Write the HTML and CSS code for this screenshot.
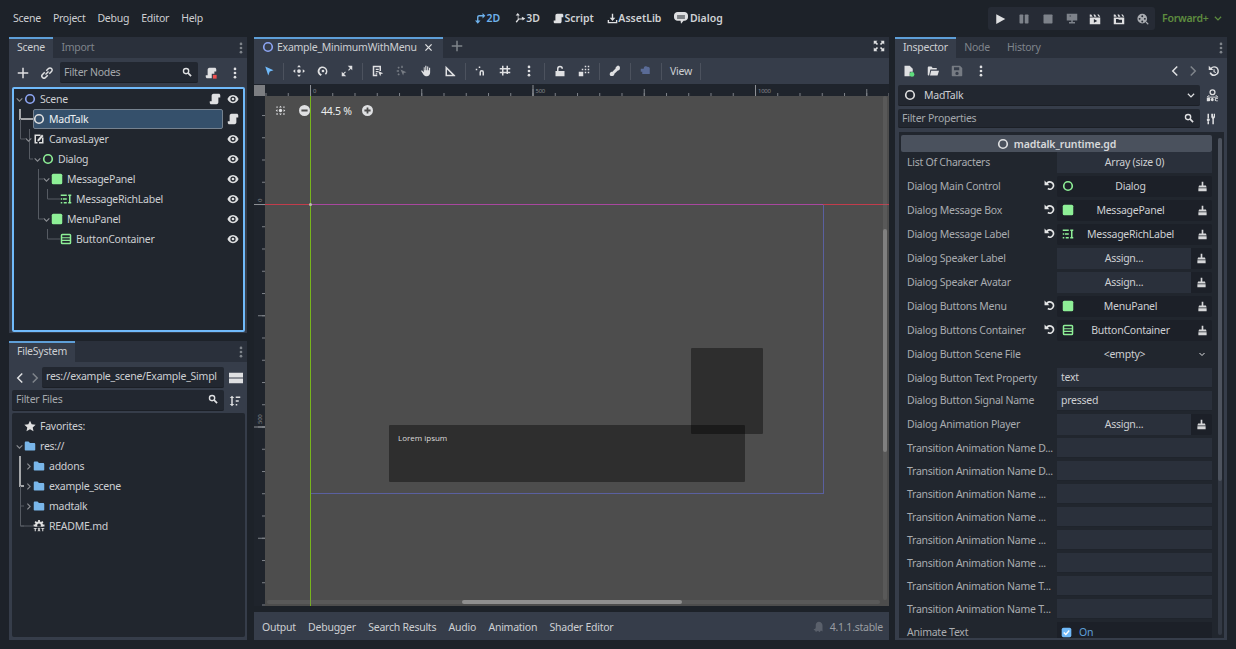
FILE: index.html
```html
<!DOCTYPE html>
<html lang="en">
<head>
<meta charset="utf-8">
<title>Godot Editor</title>
<link rel="stylesheet" href="styles.css">
</head>
<body>
<svg class="defs" aria-hidden="true">
  <symbol id="eye" viewBox="0 0 16 16"><path fill-rule="evenodd" d="M8 2.500C4 2.500 1.500 5.500.6 8c.9 2.500 3.400 5.500 7.400 5.500s6.500-3 7.400-5.500C14.500 5.500 12 2.500 8 2.500zm0 2a3.500 3.500 0 1 1 0 7 3.500 3.500 0 0 1 0-7z"/><circle cx="8" cy="8" r="1.800"/></symbol>
  <symbol id="script" viewBox="0 0 16 16"><path d="M6 1C4.300 1 3.500 2.300 3.500 4v7H1v2c0 1.100.9 2 2 2h7c1.700 0 2.500-1.300 2.500-3V6H15V3c0-1.100-.9-2-2-2z"/></symbol>
  <symbol id="node" viewBox="0 0 16 16"><circle cx="8" cy="8" r="5.700" fill="none" stroke="currentColor" stroke-width="2.200"/></symbol>
  <symbol id="panel" viewBox="0 0 16 16"><rect x="1" y="1" width="14" height="14" rx="2"/></symbol>
  <symbol id="rich" viewBox="0 0 16 16"><path d="M1 2h8v2H1zM4 7h5v2H4zM1 12h2v2H1zM5 12h4v2H5zM11 2h4v2h-1v8h1v2h-4v-2h1V4h-1z"/><path d="M1 7h2v2H1z"/></symbol>
  <symbol id="box" viewBox="0 0 16 16"><path fill-rule="evenodd" d="M3 1h10a2 2 0 0 1 2 2v10a2 2 0 0 1-2 2H3a2 2 0 0 1-2-2V3a2 2 0 0 1 2-2zm0 2v2.500h10V3zm0 4v2h10V7zm0 3.500V13h10v-2.500z"/></symbol>
  <symbol id="canvas" viewBox="0 0 16 16"><path d="M2 2h8v2H4v8h2v2H2zM14 6v8H8v-2h4V6z"/><path d="M6 9l6-7 2 2-6 7H6z"/></symbol>
  <symbol id="chev-d" viewBox="0 0 16 16"><path d="M3 6l5 5 5-5" fill="none" stroke="currentColor" stroke-width="2"/></symbol>
  <symbol id="chev-r" viewBox="0 0 16 16"><path d="M6 3l5 5-5 5" fill="none" stroke="currentColor" stroke-width="2"/></symbol>
  <symbol id="back" viewBox="0 0 16 16"><path d="M11 2L5 8l6 6" fill="none" stroke="currentColor" stroke-width="2"/></symbol>
  <symbol id="fwd" viewBox="0 0 16 16"><path d="M5 2l6 6-6 6" fill="none" stroke="currentColor" stroke-width="2"/></symbol>
  <symbol id="search" viewBox="0 0 16 16"><circle cx="6.500" cy="6.500" r="4.200" fill="none" stroke="currentColor" stroke-width="2.200"/><path d="M9.500 9.500l5 5" stroke="currentColor" stroke-width="2.800"/></symbol>
  <symbol id="plus" viewBox="0 0 16 16"><path d="M7 1h2v6h6v2H9v6H7V9H1V7h6z"/></symbol>
  <symbol id="link" viewBox="0 0 16 16"><path d="M6 10l4-4" stroke="currentColor" stroke-width="2"/><path d="M7 5l3-3a2.800 2.800 0 0 1 4 4l-3 3M9 11l-3 3a2.800 2.800 0 0 1-4-4l3-3" fill="none" stroke="currentColor" stroke-width="2"/></symbol>
  <symbol id="dots" viewBox="0 0 16 16"><circle cx="8" cy="2.500" r="1.800"/><circle cx="8" cy="8" r="1.800"/><circle cx="8" cy="13.500" r="1.800"/></symbol>
  <symbol id="folder" viewBox="0 0 16 16"><path d="M1 3.500C1 2.700 1.700 2 2.500 2H6l2 2h5.500c.8 0 1.500.7 1.500 1.500V13c0 .6-.4 1-1 1H2c-.6 0-1-.4-1-1z"/></symbol>
  <symbol id="star" viewBox="0 0 16 16"><path d="M8 1l2.200 4.800 5.300.6-3.900 3.500 1.100 5.200L8 12.400 3.300 15.100l1.100-5.200L.5 6.400l5.300-.6z"/></symbol>
  <symbol id="gear" viewBox="0 0 16 16"><path fill-rule="evenodd" d="M6.800 0h2.400v2l1.700.7L12.300 1.300 14 3l-1.400 1.400.7 1.700h2v2.400h-2l-.2.500H2.900l-.2-.5h-2V6.100h2l.7-1.700L2 3l1.700-1.700 1.400 1.400L6.800 2zM8 4.500a2.500 2.500 0 1 0 0 5 2.500 2.500 0 0 0 0-5z"/><path d="M1 10.500h4v1.300H3.700V15H2.300v-3.200H1zM6 10.500h1.500L8 12l.6-1.500H10L8.800 12.800 10 15H8.500L8 13.700 7.400 15H6l1.200-2.200zM11 10.500h4v1.300h-1.300V15h-1.400v-3.200H11z"/></symbol>
  <symbol id="layout" viewBox="0 0 16 16"><path d="M0 2h16v5.300H0zM0 8.700h16V14H0z"/></symbol>
  <symbol id="sort" viewBox="0 0 16 16"><path d="M4 1l3 3H5v8h2l-3 3-3-3h2V4H1zM9 2h6v2H9zM9 7h4v2H9zM9 12h2v2H9z"/></symbol>
  <symbol id="arrow" viewBox="0 0 16 16"><path d="M3 2l11 5-5 1.500L7 14z"/></symbol>
  <symbol id="move" viewBox="0 0 16 16"><path d="M8 0l2.500 3h-5zM8 16l-2.500-3h5zM0 8l3-2.500v5zM16 8l-3 2.500v-5z"/><circle cx="8" cy="8" r="2.500"/></symbol>
  <symbol id="rotate" viewBox="0 0 16 16"><path d="M5 14.500A6.500 6.500 0 1 1 12 13l-1.500-1.500A4.300 4.300 0 1 0 6.500 12.400z"/><circle cx="8" cy="8" r="1.800"/></symbol>
  <symbol id="scale" viewBox="0 0 16 16"><path d="M9 1h6v6l-2-2-2.500 2.500-1-1L12 4zM7 15H1V9l2 2 2.500-2.500 1 1L4 12z"/></symbol>
  <symbol id="list" viewBox="0 0 16 16"><path fill-rule="evenodd" d="M1 1h11v7h-2V3H3v10h4v2H1z"/><path d="M5 5h4v1.500H5zM5 8h3v1.500H5zM5 11h2v1.500H5zM8 8l7 3-3 1-1 3z"/></symbol>
  <symbol id="pivot" viewBox="0 0 16 16"><path d="M7 1h2v3H7zM1 7h3v2H1zM6 6l8 3.500-3.500 1L9.500 14zM2 3l2-1 1 2-2 1zM2 13l1-2 2 1-1 2z"/></symbol>
  <symbol id="hand" viewBox="0 0 16 16"><path d="M7 1h1.500v6H9.500V2H11v5h1V3.500h1.500V10c0 3-2 5-4.500 5-2 0-3.500-1-4.500-2.500L1.500 8l1-1 2.500 2.500V3h1.200v4H7z"/></symbol>
  <symbol id="ruler" viewBox="0 0 16 16"><path fill-rule="evenodd" d="M2 1l13 13v1H2zm2 5v7h7z"/></symbol>
  <symbol id="snap" viewBox="0 0 16 16"><path d="M6 14V9.500a3 3 0 0 1 6 0V14h-2V9.500a1 1 0 0 0-2 0V14zM1 5h2v2H1zM5 2h2v2H5z"/></symbol>
  <symbol id="grid" viewBox="0 0 16 16"><path d="M4 1h2v3h4V1h2v3h3v2h-3v3h3v2h-3v1H10v-1H6v3H4v-3H1V9h3V6H1V4h3zm2 5v3h4V6z"/></symbol>
  <symbol id="lock" viewBox="0 0 16 16"><path d="M2 8h12v7H2z"/><path d="M4 8V5a4 4 0 0 1 8 0h-2a2 2 0 0 0-4 0v3z"/></symbol>
  <symbol id="group" viewBox="0 0 16 16"><path d="M1 9h6v6H1zM9 1h2v2H9zM13 1h2v2h-2zM13 5h2v2h-2zM9 5h2v2H9zM5 5h2v2H5zM9 9h2v2H9zM13 9h2v2h-2z"/></symbol>
  <symbol id="bone" viewBox="0 0 16 16"><path d="M10.500 1.500a2.500 2.500 0 0 1 4 2.700 2.500 2.500 0 0 1-2.700 3L7.200 11.800a2.500 2.500 0 0 1-3 2.700 2.500 2.500 0 0 1-2.700-4 2.500 2.500 0 0 1 2.700-1.300L8.800 4.600c-.3-1.200.5-2.500 1.700-3.100z"/></symbol>
  <symbol id="cam" viewBox="0 0 16 16"><path d="M5 4a3 3 0 0 1 5-1.500A3 3 0 0 1 13 6v6H3V9H1V5h4z"/></symbol>
  <symbol id="fit" viewBox="0 0 16 16"><circle cx="8" cy="8" r="2.400"/><path d="M8 1l2 2.500H6zM8 15l-2-2.500h4zM1 8l2.500-2v4zM15 8l-2.500 2V6zM2 2h2v2H2zM12 2h2v2h-2zM2 12h2v2H2zM12 12h2v2h-2z"/></symbol>
  <symbol id="zminus" viewBox="0 0 16 16"><path fill-rule="evenodd" d="M8 0a8 8 0 1 1 0 16A8 8 0 0 1 8 0zM3.500 6.700v2.600h9V6.700z"/></symbol>
  <symbol id="zplus" viewBox="0 0 16 16"><path fill-rule="evenodd" d="M8 0a8 8 0 1 1 0 16A8 8 0 0 1 8 0zM6.700 3.500v3.200H3.500v2.600h3.200v3.200h2.600V9.300h3.200V6.700H9.300V3.500z"/></symbol>
  <symbol id="close" viewBox="0 0 16 16"><path d="M2.500 2.500l11 11M13.500 2.500l-11 11" stroke="currentColor" stroke-width="2.300"/></symbol>
  <symbol id="full" viewBox="0 0 16 16"><path d="M1 1h5L4.300 2.700l2.500 2.500-1.600 1.600-2.500-2.500L1 6zM15 1v5l-1.700-1.700-2.500 2.500-1.600-1.600 2.500-2.500L10 1zM1 15v-5l1.700 1.700 2.500-2.500 1.600 1.600-2.500 2.500L6 15zM15 15h-5l1.700-1.700-2.500-2.500 1.600-1.600 2.500 2.500L15 10z"/></symbol>
  <symbol id="i2d" viewBox="0 0 16 16"><path d="M3 11V6c0-1.700 1.300-3 3-3h5V0l4 4-4 4V5H6a1 1 0 0 0-1 1v5h3l-4 4.500L0 11z"/></symbol>
  <symbol id="i3d" viewBox="0 0 16 16"><path d="M4 0l3 3.500H5V8h5V5.500L15 8l-4 3V9.500H6L2.500 14 1 12.500 4 9V3.500H1z"/></symbol>
  <symbol id="asset" viewBox="0 0 16 16"><path d="M7 1h2v6h3l-4 4.500L4 7h3zM1 10h2v3h10v-3h2v5H1z"/></symbol>
  <symbol id="bubble" viewBox="0 0 16 16"><path d="M4 1h8c2 0 4 1.500 4 4v2c0 2.500-2 4-4 4h-1l-3 3.500L7.500 11H4C2 11 0 9.500 0 7V5c0-2.500 2-4 4-4z"/><path d="M3.500 5h9v1.300h-9zM3.500 7.500h9v1h-9z" fill="#1d2229"/></symbol>
  <symbol id="play" viewBox="0 0 16 16"><path d="M3 1.500l12 6.500-12 6.500z"/></symbol>
  <symbol id="pause" viewBox="0 0 16 16"><rect x="2" y="2" width="5" height="12" rx="1"/><rect x="9" y="2" width="5" height="12" rx="1"/></symbol>
  <symbol id="stop" viewBox="0 0 16 16"><rect x="2" y="2" width="12" height="12" rx="1"/></symbol>
  <symbol id="remote" viewBox="0 0 16 16"><path fill-rule="evenodd" d="M1 1h14v9H9v2h3v2H4v-2h3v-2H1zm4 2v2l2-1z"/></symbol>
  <symbol id="clap" viewBox="0 0 16 16"><path d="M1 6h14v9H1zM1 2h2l2 3H1zM6 2h2l2 3H7zM11 2h2l2 3h-2z"/><path d="M6.500 8v5l4.500-2.500z" fill="#262b35"/></symbol>
  <symbol id="clap2" viewBox="0 0 16 16"><path d="M1 6h14v9H1zM1 2h2l2 3H1zM6 2h2l2 3H7zM11 2h2l2 3h-2z"/><path d="M4 8h3l1 1h4v4H4z" fill="#262b35"/></symbol>
  <symbol id="reel" viewBox="0 0 16 16"><path fill-rule="evenodd" d="M7 1a6.500 6.500 0 1 1 0 13A6.500 6.500 0 0 1 7 1zM7 3a1.300 1.300 0 1 0 0 2.600A1.300 1.300 0 0 0 7 3zM3.500 6.500a1.300 1.300 0 1 0 0 2.600 1.300 1.300 0 0 0 0-2.600zm7 0a1.300 1.300 0 1 0 0 2.600 1.300 1.300 0 0 0 0-2.600zM7 10a1.300 1.300 0 1 0 0 2.600A1.300 1.300 0 0 0 7 10z"/><path d="M12 12l3 3" stroke="currentColor" stroke-width="1.500"/></symbol>
  <symbol id="newfile" viewBox="0 0 16 16"><path d="M2 1h7l4 4v4H9v6H2z"/><circle cx="12" cy="12.500" r="3.200" fill="#5fdd7d"/></symbol>
  <symbol id="open" viewBox="0 0 16 16"><path d="M1 3.500C1 2.700 1.700 2 2.500 2H6l1.500 2h5.500v2H4.500L2.800 14H2c-.6 0-1-.4-1-1z"/><path d="M5.500 7.500H16L14 14H4z"/></symbol>
  <symbol id="save" viewBox="0 0 16 16"><path fill-rule="evenodd" d="M1 2c0-.6.4-1 1-1h10l3 3v10c0 .6-.4 1-1 1H2c-.6 0-1-.4-1-1zm3 1v4h7V3zm4 6a2.200 2.200 0 1 0 0 4.400A2.200 2.200 0 0 0 8 9z"/></symbol>
  <symbol id="history" viewBox="0 0 16 16"><path d="M8 1.500A6.500 6.500 0 1 1 2 10.500l1.900-.8A4.500 4.500 0 1 0 8 3.500a4.300 4.300 0 0 0-2.800 1L7 6.500H1V1l2.700 2.700A6.500 6.500 0 0 1 8 1.500z"/><path d="M7.300 5.500h1.500v3l2 1-.7 1.300-2.800-1.500z"/></symbol>
  <symbol id="doc" viewBox="0 0 16 16"><circle cx="8" cy="4" r="3" fill="none" stroke="currentColor" stroke-width="1.600"/><path d="M4 7.500L1.500 10h13L12 7.500" fill="none" stroke="currentColor" stroke-width="1.200"/><path d="M1 11h3c1 0 1.300.8 1.300 2S5 15 4 15H1zM6 13c0-1.300.7-2 1.800-2s1.700.7 1.700 2-.6 2-1.700 2S6 14.300 6 13zM14.700 11H12.500c-1 0-1.700.7-1.700 2s.7 2 1.700 2h2.200v-1h-2c-.5 0-.7-.4-.7-1s.2-1 .7-1h2z"/></symbol>
  <symbol id="tune" viewBox="0 0 16 16"><path d="M2 1h2v6H2zM2 11h2v4H2zM7 1v4c0 1 .5 2 1.500 2.500V15h2V7.500C11.500 7 12 6 12 5V1h-1.500v3.500h-1V1z"/><circle cx="3" cy="9" r="2"/></symbol>
  <symbol id="reset" viewBox="0 0 16 16"><path d="M8.500 1.500a6.500 6.500 0 1 1-3.600 11.900l1.400-2a4 4 0 1 0-.7-6.100l2.300 2.400H.8V.8l2.700 2.800A6.500 6.500 0 0 1 8.500 1.500z"/></symbol>
  <symbol id="brush" viewBox="0 0 16 16"><path d="M6.800 1h2.400v5.500H13l1 3H2l1-3h3.800zM2 10.500h12V15H2z"/></symbol>
  <symbol id="ghost" viewBox="0 0 16 16"><path d="M9 1c3 0 5 2.500 5 5v8l-2-1.500L10 15l-2-2-3 1.500c0-2-2-2-3-3.500 2 0 3-1 3-3V5c0-2 2-4 4-4z"/></symbol>
  <symbol id="check" viewBox="0 0 16 16"><rect x="1" y="1" width="14" height="14" rx="2.500"/><path d="M4 8l3 3 5-6" fill="none" stroke="#fff" stroke-width="2"/></symbol>
  <symbol id="addscript" viewBox="0 0 16 16"><path d="M6 1C4.300 1 3.500 2.300 3.500 4v7H1v2c0 1.100.9 2 2 2h6V9h3.500V6H15V3c0-1.100-.9-2-2-2z"/><rect x="10.500" y="10.500" width="5" height="5" fill="#f05050"/></symbol>
</svg>

<header class="topbar">
  <nav class="menu">
    <span>Scene</span><span>Project</span><span>Debug</span><span>Editor</span><span>Help</span>
  </nav>
  <nav class="modes">
    <span class="mode mode-on"><svg class="ic"><use href="#i2d"/></svg>2D</span>
    <span class="mode"><svg class="ic"><use href="#i3d"/></svg>3D</span>
    <span class="mode"><svg class="ic"><use href="#script"/></svg>Script</span>
    <span class="mode"><svg class="ic"><use href="#asset"/></svg>AssetLib</span>
    <span class="mode"><svg class="ic ic-wide"><use href="#bubble"/></svg>Dialog</span>
  </nav>
  <div class="runbar">
    <span class="run-btn"><svg class="ic"><use href="#play"/></svg></span>
    <span class="run-btn dim"><svg class="ic"><use href="#pause"/></svg></span>
    <span class="run-btn dim"><svg class="ic"><use href="#stop"/></svg></span>
    <span class="run-btn dim"><svg class="ic"><use href="#remote"/></svg></span>
    <span class="run-btn"><svg class="ic"><use href="#clap"/></svg></span>
    <span class="run-btn"><svg class="ic"><use href="#clap2"/></svg></span>
    <span class="run-btn dim2"><svg class="ic"><use href="#reel"/></svg></span>
  </div>
  <div class="renderer">Forward+<svg class="ic ic-sm"><use href="#chev-d"/></svg></div>
</header>

<main class="main">
  <aside class="left">
    <section class="panel scene-panel">
      <div class="tabs">
        <span class="tab on">Scene</span><span class="tab">Import</span>
        <svg class="ic tabs-dots"><use href="#dots"/></svg>
      </div>
      <div class="scene-tools">
        <span class="btn22"><svg class="ic"><use href="#plus"/></svg></span>
        <span class="btn22"><svg class="ic"><use href="#link"/></svg></span>
        <div class="field filter-nodes"><span class="ph">Filter Nodes</span><svg class="ic ic-sm"><use href="#search"/></svg></div>
        <span class="btn22"><svg class="ic"><use href="#addscript"/></svg></span>
        <span class="btn22"><svg class="ic"><use href="#dots"/></svg></span>
      </div>
      <div class="tree scene-tree">
        <svg class="tree-lines" width="229" height="241">
          <path class="ln-hi" d="M6 20V30H19"/>
          <path class="ln" d="M6.500 30V50H11M15.500 40V70H19M24.500 80V130H29M24.500 90H29M33.500 100V110H46M33.500 140V150H46"/>
        </svg>
        <div class="row l0"><svg class="chev"><use href="#chev-d"/></svg><svg class="ic n-blue"><use href="#node"/></svg><span class="lb">Scene</span><svg class="ic act a1"><use href="#script"/></svg><svg class="ic act"><use href="#eye"/></svg></div>
        <div class="row row-sel"><div class="sel"><svg class="ic n-white"><use href="#node"/></svg><span class="lb lb-sel">MadTalk</span></div><svg class="ic act a2"><use href="#script"/></svg></div>
        <div class="row l1"><svg class="chev"><use href="#chev-d"/></svg><svg class="ic n-white"><use href="#canvas"/></svg><span class="lb">CanvasLayer</span><svg class="ic act"><use href="#eye"/></svg></div>
        <div class="row l2"><svg class="chev"><use href="#chev-d"/></svg><svg class="ic n-green"><use href="#node"/></svg><span class="lb">Dialog</span><svg class="ic act"><use href="#eye"/></svg></div>
        <div class="row l3"><svg class="chev"><use href="#chev-d"/></svg><svg class="ic n-green"><use href="#panel"/></svg><span class="lb">MessagePanel</span><svg class="ic act"><use href="#eye"/></svg></div>
        <div class="row l4"><span class="chev"></span><svg class="ic n-green"><use href="#rich"/></svg><span class="lb">MessageRichLabel</span><svg class="ic act"><use href="#eye"/></svg></div>
        <div class="row l3"><svg class="chev"><use href="#chev-d"/></svg><svg class="ic n-green"><use href="#panel"/></svg><span class="lb">MenuPanel</span><svg class="ic act"><use href="#eye"/></svg></div>
        <div class="row l4"><span class="chev"></span><svg class="ic n-green"><use href="#box"/></svg><span class="lb">ButtonContainer</span><svg class="ic act"><use href="#eye"/></svg></div>
      </div>
    </section>

    <section class="panel fs-panel">
      <div class="tabs">
        <span class="tab on">FileSystem</span>
        <svg class="ic tabs-dots"><use href="#dots"/></svg>
      </div>
      <div class="fs-path">
        <span class="btn15"><svg class="ic"><use href="#back"/></svg></span>
        <span class="btn15 dim"><svg class="ic"><use href="#fwd"/></svg></span>
        <div class="field path-field">res://example_scene/Example_Simpl</div>
        <span class="fs-layout"><svg class="ic ic-lg"><use href="#layout"/></svg></span>
      </div>
      <div class="fs-filter">
        <div class="field filter-files"><span class="ph">Filter Files</span><svg class="ic ic-sm"><use href="#search"/></svg></div>
        <span class="fs-sort"><svg class="ic"><use href="#sort"/></svg></span>
      </div>
      <div class="tree fs-tree">
        <svg class="tree-lines" width="229" height="220">
          <path class="ln-hi" d="M6 41V71H10"/>
          <path class="ln" d="M6.500 71V111H10M6.500 91H10M6.500 111H19"/>
        </svg>
        <div class="row l0"><span class="chev"></span><svg class="ic n-white"><use href="#star"/></svg><span class="lb">Favorites:</span></div>
        <div class="row l0"><svg class="chev"><use href="#chev-d"/></svg><svg class="ic n-folder"><use href="#folder"/></svg><span class="lb">res://</span></div>
        <div class="row l1"><svg class="chev"><use href="#chev-r"/></svg><svg class="ic n-folder"><use href="#folder"/></svg><span class="lb">addons</span></div>
        <div class="row l1"><svg class="chev"><use href="#chev-r"/></svg><svg class="ic n-folder"><use href="#folder"/></svg><span class="lb">example_scene</span></div>
        <div class="row l1"><svg class="chev"><use href="#chev-r"/></svg><svg class="ic n-folder"><use href="#folder"/></svg><span class="lb">madtalk</span></div>
        <div class="row l1"><span class="chev"></span><svg class="ic n-white"><use href="#gear"/></svg><span class="lb">README.md</span></div>
      </div>
    </section>
  </aside>

  <section class="center">
    <div class="doc-tabs">
      <span class="doc-tab"><svg class="ic n-blue"><use href="#node"/></svg><span class="doc-name">Example_MinimumWithMenu</span><svg class="ic ic-close"><use href="#close"/></svg></span>
      <svg class="ic doc-plus"><use href="#plus"/></svg>
      <svg class="ic doc-full"><use href="#full"/></svg>
    </div>
    <div class="tools">
      <span class="t t-blue"><svg class="ic"><use href="#arrow"/></svg></span>
      <i class="sep sep-first"></i>
      <span class="t"><svg class="ic"><use href="#move"/></svg></span>
      <span class="t"><svg class="ic"><use href="#rotate"/></svg></span>
      <span class="t"><svg class="ic"><use href="#scale"/></svg></span>
      <i class="sep"></i>
      <span class="t"><svg class="ic"><use href="#list"/></svg></span>
      <span class="t t-dim"><svg class="ic"><use href="#pivot"/></svg></span>
      <span class="t"><svg class="ic"><use href="#hand"/></svg></span>
      <span class="t"><svg class="ic"><use href="#ruler"/></svg></span>
      <i class="sep"></i>
      <span class="t"><svg class="ic"><use href="#snap"/></svg></span>
      <span class="t"><svg class="ic"><use href="#grid"/></svg></span>
      <span class="t"><svg class="ic"><use href="#dots"/></svg></span>
      <i class="sep"></i>
      <span class="t"><svg class="ic"><use href="#lock"/></svg></span>
      <span class="t"><svg class="ic"><use href="#group"/></svg></span>
      <i class="sep"></i>
      <span class="t"><svg class="ic"><use href="#bone"/></svg></span>
      <i class="sep"></i>
      <span class="t t-cam"><svg class="ic"><use href="#cam"/></svg></span>
      <i class="sep"></i>
      <span class="t-view">View</span>
      <i class="sep"></i>
    </div>
    <div class="viewport">
      <div class="corner"></div>
      <svg class="ruler-top" width="624" height="11">
        <defs>
          <pattern id="tmin" x="45" width="22.25" height="11" patternUnits="userSpaceOnUse"><rect y="8" width="1" height="3" fill="#7d8187"/></pattern>
          <pattern id="tmid" x="45" width="111.25" height="11" patternUnits="userSpaceOnUse"><rect y="4" width="1" height="7" fill="#7d8187"/></pattern>
          <pattern id="tmaj" x="45" width="222.5" height="11" patternUnits="userSpaceOnUse"><rect width="1" height="11" fill="#8d9095"/></pattern>
        </defs>
        <rect width="624" height="11" fill="url(#tmin)"/>
        <rect width="624" height="11" fill="url(#tmid)"/>
        <rect width="624" height="11" fill="url(#tmaj)"/>
        <text class="rt" x="48" y="8">0</text>
        <text class="rt" x="270.500" y="8">500</text>
        <text class="rt" x="493" y="8">1000</text>
      </svg>
      <svg class="ruler-left" width="11" height="510">
        <defs>
          <pattern id="lmin" y="108" width="11" height="22.25" patternUnits="userSpaceOnUse"><rect x="8" width="3" height="1" fill="#7d8187"/></pattern>
          <pattern id="lmid" y="108" width="11" height="111.25" patternUnits="userSpaceOnUse"><rect x="4" width="7" height="1" fill="#7d8187"/></pattern>
          <pattern id="lmaj" y="108" width="11" height="222.5" patternUnits="userSpaceOnUse"><rect width="11" height="1" fill="#8d9095"/></pattern>
        </defs>
        <rect width="11" height="510" fill="url(#lmin)"/>
        <rect width="11" height="510" fill="url(#lmid)"/>
        <rect width="11" height="510" fill="url(#lmaj)"/>
        <text class="rt" transform="translate(8 106) rotate(-90)">0</text>
        <text class="rt" transform="translate(8 328) rotate(-90)">500</text>
      </svg>
      <div class="canvas">
        <div class="vp-rect"></div>
        <div class="axis-h"></div>
        <div class="axis-h2"></div>
        <div class="axis-v"></div>
        <div class="origin"></div>
        <div class="ui-box menu-panel"></div>
        <div class="ui-box msg-panel">Lorem ipsum</div>
        <div class="zoom-bar">
          <svg class="ic z-fit"><use href="#fit"/></svg>
          <svg class="ic z-minus"><use href="#zminus"/></svg>
          <span class="z-val">44.5 %</span>
          <svg class="ic"><use href="#zplus"/></svg>
        </div>
        <div class="vbar"><div class="vthumb"></div></div>
        <div class="hbar"><div class="hthumb"></div></div>
      </div>
    </div>
    <div class="bottom">
      <span>Output</span><span>Debugger</span><span>Search Results</span><span>Audio</span><span>Animation</span><span>Shader Editor</span>
      <svg class="ic ghost"><use href="#ghost"/></svg>
      <span class="version">4.1.1.stable</span>
    </div>
  </section>

  <aside class="panel right">
    <div class="tabs">
      <span class="tab on">Inspector</span><span class="tab">Node</span><span class="tab">History</span>
      <svg class="ic tabs-dots"><use href="#dots"/></svg>
    </div>
    <div class="ins-tools">
      <span class="t"><svg class="ic"><use href="#newfile"/></svg></span>
      <span class="t"><svg class="ic"><use href="#open"/></svg></span>
      <span class="t t-dim"><svg class="ic"><use href="#save"/></svg></span>
      <span class="t"><svg class="ic"><use href="#dots"/></svg></span>
      <span class="ins-back"><svg class="ic"><use href="#back"/></svg></span>
      <span class="ins-fwd"><svg class="ic"><use href="#fwd"/></svg></span>
      <span class="t"><svg class="ic"><use href="#history"/></svg></span>
    </div>
    <div class="ins-line">
      <div class="field obj-field"><svg class="ic n-white"><use href="#node"/></svg><span class="obj-name">MadTalk</span><svg class="ic ic-sm"><use href="#chev-d"/></svg></div>
      <span class="t"><svg class="ic ic-doc"><use href="#doc"/></svg></span>
    </div>
    <div class="ins-line line2">
      <div class="field obj-filter"><span class="ph">Filter Properties</span><svg class="ic ic-sm"><use href="#search"/></svg></div>
      <span class="t"><svg class="ic"><use href="#tune"/></svg></span>
    </div>
    <div class="ins-body">
      <div class="ins-head"><svg class="ic"><use href="#node"/></svg>madtalk_runtime.gd</div>
      <div class="props">
        <div class="prop"><span class="pl">List Of Characters</span><div class="val v-btn">Array (size 0)</div></div>
        <div class="prop"><span class="pl">Dialog Main Control<svg class="ic rs"><use href="#reset"/></svg></span><div class="val v-node"><svg class="ic n-green"><use href="#node"/></svg><span>Dialog</span><svg class="ic ic-br"><use href="#brush"/></svg></div></div>
        <div class="prop"><span class="pl">Dialog Message Box<svg class="ic rs"><use href="#reset"/></svg></span><div class="val v-node"><svg class="ic n-green"><use href="#panel"/></svg><span>MessagePanel</span><svg class="ic ic-br"><use href="#brush"/></svg></div></div>
        <div class="prop"><span class="pl">Dialog Message Label<svg class="ic rs"><use href="#reset"/></svg></span><div class="val v-node"><svg class="ic n-green"><use href="#rich"/></svg><span>MessageRichLabel</span><svg class="ic ic-br"><use href="#brush"/></svg></div></div>
        <div class="prop"><span class="pl">Dialog Speaker Label</span><div class="val v-assign"><span>Assign...</span><svg class="ic ic-br"><use href="#brush"/></svg></div></div>
        <div class="prop"><span class="pl">Dialog Speaker Avatar</span><div class="val v-assign"><span>Assign...</span><svg class="ic ic-br"><use href="#brush"/></svg></div></div>
        <div class="prop"><span class="pl">Dialog Buttons Menu<svg class="ic rs"><use href="#reset"/></svg></span><div class="val v-node"><svg class="ic n-green"><use href="#panel"/></svg><span>MenuPanel</span><svg class="ic ic-br"><use href="#brush"/></svg></div></div>
        <div class="prop"><span class="pl">Dialog Buttons Container<svg class="ic rs"><use href="#reset"/></svg></span><div class="val v-node"><svg class="ic n-green"><use href="#box"/></svg><span>ButtonContainer</span><svg class="ic ic-br"><use href="#brush"/></svg></div></div>
        <div class="prop"><span class="pl">Dialog Button Scene File</span><div class="val v-drop"><span>&lt;empty&gt;</span><svg class="ic ic-xs"><use href="#chev-d"/></svg></div></div>
        <div class="prop p20"><span class="pl">Dialog Button Text Property</span><div class="val v-line">text</div></div>
        <div class="prop p20"><span class="pl pl-up">Dialog Button Signal Name</span><div class="val v-line">pressed</div></div>
        <div class="prop"><span class="pl">Dialog Animation Player</span><div class="val v-assign"><span>Assign...</span><svg class="ic ic-br"><use href="#brush"/></svg></div></div>
        <div class="prop p20"><span class="pl">Transition Animation Name D...</span><div class="val v-line"></div></div>
        <div class="prop p20"><span class="pl">Transition Animation Name D...</span><div class="val v-line"></div></div>
        <div class="prop p20"><span class="pl">Transition Animation Name ...</span><div class="val v-line"></div></div>
        <div class="prop p20"><span class="pl">Transition Animation Name ...</span><div class="val v-line"></div></div>
        <div class="prop p20"><span class="pl">Transition Animation Name ...</span><div class="val v-line"></div></div>
        <div class="prop p20"><span class="pl">Transition Animation Name ...</span><div class="val v-line"></div></div>
        <div class="prop p20"><span class="pl">Transition Animation Name T...</span><div class="val v-line"></div></div>
        <div class="prop p20"><span class="pl">Transition Animation Name T...</span><div class="val v-line"></div></div>
        <div class="prop"><span class="pl">Animate Text</span><div class="val v-check"><svg class="ic n-check"><use href="#check"/></svg><span>On</span></div></div>
      </div>
      <div class="ins-scroll"><div class="ins-thumb"></div></div>
    </div>
  </aside>
</main>
</body>
</html>
```

FILE: styles.css
```css
* { box-sizing: border-box; }
html, body { margin: 0; height: 100%; }
body {
  width: 1236px;
  height: 649px;
  overflow: hidden;
  background: #1d2229;
  color: #cdcfd2;
  font-family: "Noto Sans", sans-serif;
  font-size: 10.5px;
  letter-spacing: -.25px;
  line-height: 14px;
}
.defs { display: none; }
.ic { width: 12px; height: 12px; fill: currentColor; flex: none; display: block; color: #dfe0e2; }
.ic-sm { width: 10px; height: 10px; }
.ic-xs { width: 8px; height: 8px; }
.ic-lg { width: 14px; height: 14px; }

/* top bar */
.topbar { height: 37px; display: flex; align-items: center; }
.menu { width: 475px; padding-left: 13px; display: flex; gap: 12px; padding-bottom: 2px; }
.modes { display: flex; align-items: center; font-weight: 600; color: #cfd1d4; letter-spacing: 0; padding-bottom: 1px; }
.mode { display: flex; align-items: center; margin-right: 13px; }
.mode .ic { width: 11px; height: 11px; margin-right: .5px; }
.mode .ic-wide { width: 14px; height: 14px; margin-right: 1.500px; }
.mode-on { color: #6fb2ec; margin-right: 14.5px; }
.mode-on .ic { color: #6fb2ec; }
.runbar { margin-left: auto; width: 167px; height: 23px; background: #262b35; border-radius: 3px; display: flex; align-items: center; }
.run-btn { width: 24px; display: flex; justify-content: center; }
.run-btn.dim .ic { color: #7d828a; }
.run-btn.dim2 .ic { color: #a9acb1; }
.renderer { width: 81px; display: flex; align-items: center; padding: 0 0 1px 7px; color: #5d8c3f; font-weight: 600; }
.renderer .ic { color: #5d8c3f; margin-left: 5px; }

/* main layout */
.main { display: flex; height: 603px; padding-left: 9px; }
.left { width: 238px; margin-right: 7px; display: flex; flex-direction: column; gap: 8px; }
.panel { background: #363d4a; }
.scene-panel { height: 296px; display: flex; flex-direction: column; }
.fs-panel { height: 299px; display: flex; flex-direction: column; }
.tabs { height: 21px; background: #2a303b; display: flex; position: relative; align-items: stretch; flex: none; }
.tab { padding: 0 8.5px 3px; display: flex; align-items: center; color: #7f848b; border-top: 2px solid transparent; }
.tab.on { background: #363d4a; color: #cdcfd2; border-top-color: #5e9fd8; padding: 0 8px 3px; }
.tabs-dots { position: absolute; right: 0; top: 5px; color: #7f848b; }
.field { background: #222730; border-bottom: 1px solid #1b1f26; border-radius: 2px; display: flex; align-items: center; }
.ph { color: #a4a7ac; flex: 1; }

/* scene panel */
.scene-tools { height: 29px; display: flex; align-items: center; gap: 2px; padding-left: 3px; flex: none; }
.btn22 { width: 22px; display: flex; justify-content: center; }
.filter-nodes { width: 138px; height: 21px; padding: 0 6px 0 4px; }
.tree { background: #21262e; position: relative; flex: 1; }
.scene-tree { margin: 0 2px 1px 3px; border: 2px solid #70bafa; border-radius: 2px; }
.tree-lines { position: absolute; left: 0; top: 0; fill: none; }
.ln { stroke: #565b63; stroke-width: 1; }
.ln-hi { stroke: #a5a7aa; stroke-width: 2; }
.row { height: 20px; display: flex; align-items: center; position: relative; padding-right: 4px; }
.chev { width: 9px; height: 9px; flex: none; color: #8b8e93; fill: currentColor; }
.l0 { padding-left: 1px; }
.l1 { padding-left: 10px; }
.l2 { padding-left: 19px; }
.l3 { padding-left: 28px; }
.l4 { padding-left: 37px; }
.lb { margin-left: 4px; flex: 1; }
.a1 { margin-right: 6px; }
.a2 { margin-left: 4px; }
.row-sel { padding-left: 19px; }
.sel { width: 190px; height: 20px; display: flex; align-items: center; background: #35506b; border: 1px solid #76828f; border-radius: 2px; flex: none; }
.sel .ic { margin-left: -1px; }
.lb-sel { color: #eef0f2; margin-left: 4px; }
.n-blue { color: #8da5f3; }
.n-white { color: #e0e0e0; }
.n-green { color: #8eef97; }
.n-folder { color: #79b6e9; }
.n-check { color: #70bafa; }

/* file system panel */
.fs-path { display: flex; align-items: center; padding: 5px 0 0 3px; flex: none; }
.btn15 { width: 15px; display: flex; justify-content: center; }
.btn15.dim .ic { color: #7f848b; }
.path-field { width: 182px; height: 21px; padding: 0 0 2px 4px; white-space: nowrap; overflow: hidden; }
.fs-layout { margin-left: 5px; }
.fs-filter { display: flex; align-items: center; margin-top: 2px; padding-left: 3px; flex: none; }
.filter-files { width: 212px; height: 21px; padding: 0 6px 2px 4px; }
.fs-sort { margin-left: 5px; }
.fs-tree { margin: 2px 2px 3px 3px; border: 2px solid transparent; padding-top: 1px; border-radius: 2px; }

/* center */
.center { width: 635px; margin-right: 6px; display: flex; flex-direction: column; }
.doc-tabs { height: 21px; background: #2a303b; display: flex; align-items: stretch; flex: none; }
.doc-tab { width: 189px; background: #363d4a; border-top: 2px solid #5e9fd8; display: flex; align-items: center; padding: 0 0 3px 8px; }
.doc-name { margin-left: 3px; width: 147px; white-space: nowrap; }
.ic-close { width: 9px; height: 9px; }
.doc-plus { margin: 3px 0 0 8px; color: #7f848b; }
.doc-full { margin: 3px 4px 0 auto; }
.tools { height: 26px; background: #363d4a; display: flex; align-items: center; flex: none; padding-left: 3px; }
.t { width: 24px; display: flex; justify-content: center; flex: none; }
.t-blue .ic { color: #70bafa; }
.t-dim .ic { color: #767b83; }
.t-cam .ic { color: #5a6b96; }
.sep { width: 1px; height: 17px; background: #4c525e; flex: none; margin: 0 3px; }
.sep-first { margin-left: 2px; }
.t-view { width: 32px; text-align: center; flex: none; }
.viewport { display: grid; grid-template-columns: 11px 624px; grid-template-rows: 1px 11px 510px; flex: none; background: #1f242c; }
.corner { grid-column: 1; grid-row: 2; background: #7c7e82; }
.ruler-top { grid-column: 2; grid-row: 2; display: block; }
.ruler-left { grid-column: 1; grid-row: 3; display: block; }
.rt { font-size: 6px; fill: #85888d; font-family: "Noto Sans", sans-serif; }
.canvas { grid-column: 2; grid-row: 3; position: relative; background: #4d4d4d; overflow: hidden; }
.vp-rect { position: absolute; left: 45px; top: 108px; width: 514px; height: 290px; border: 1px solid #5a60a0; }
.axis-h { position: absolute; left: 0; right: 0; top: 108px; height: 1px; background: #c23c4c; }
.axis-h2 { position: absolute; left: 45px; width: 513px; top: 108px; height: 1px; background: #a8479f; }
.axis-v { position: absolute; left: 45px; top: 0; bottom: 0; width: 1px; background: #77b51c; }
.origin { position: absolute; left: 44px; top: 107px; width: 3px; height: 3px; border-radius: 50%; background: #b9bdb0; }
.ui-box { position: absolute; background: rgba(0, 0, 0, .4); border-radius: 1px; }
.menu-panel { left: 426px; top: 252px; width: 72px; height: 86px; }
.msg-panel { left: 124px; top: 329px; width: 356px; height: 57px; padding: 7px 9px; color: #dcdcdc; font: 8px/11px "Open Sans", sans-serif; letter-spacing: 0; }
.zoom-bar { position: absolute; left: 10px; top: 8px; display: flex; align-items: center; height: 13px; }
.z-fit { width: 11px; height: 11px; margin-right: 13px; }
.z-minus { width: 11px; height: 11px; }
.zoom-bar .ic:last-child { width: 11px; height: 11px; }
.z-val { margin: 0 11px; color: #eceded; white-space: nowrap; width: 30px; }
.vbar { position: absolute; right: 2px; top: 0; bottom: 6px; width: 4px; background: rgba(120, 120, 120, .3); border-radius: 2px; }
.vthumb { height: 223px; margin-top: 133px; background: #808080; border-radius: 2px; }
.hbar { position: absolute; left: 2px; right: 9px; bottom: 2px; height: 4px; background: rgba(120, 120, 120, .3); border-radius: 2px; }
.hthumb { width: 220px; margin-left: 195px; height: 4px; background: #8f8f8f; border-radius: 2px; }
.bottom { margin-top: 6px; height: 28px; background: #363d4a; display: flex; align-items: center; padding: 1px 6px 0 8px; gap: 12.4px; flex: none; }
.ghost { margin-left: auto; color: #5a606b; }
.version { color: #9a9da2; margin-left: -7px; }

/* inspector */
.right { width: 332px; height: 603px; display: flex; flex-direction: column; }
.ins-tools { height: 26px; display: flex; align-items: center; padding-left: 2px; flex: none; }
.ins-back { margin-left: auto; width: 18px; display: flex; justify-content: center; }
.ins-fwd { width: 18px; display: flex; justify-content: center; }
.ins-fwd .ic { color: #7f848b; }
.ins-tools .t:last-child { margin-right: 1px; }
.ins-line { display: flex; align-items: center; padding-left: 3px; margin-top: 1px; flex: none; }
.line2 { margin-top: 3px; }
.obj-field { width: 302px; height: 21px; padding: 0 4px 0 6px; }
.obj-name { flex: 1; margin-left: 8px; }
.obj-filter { width: 302px; height: 19px; padding: 0 6px 0 4px; }
.ic-doc { width: 13px; height: 13px; }
.ins-body { margin: 4px 3px 2px 4px; background: #21262e; flex: 1; position: relative; overflow: hidden; padding: 3px 0 0 2px; }
.ins-head { width: 311px; height: 17px; background: #4a515d; border-radius: 2px; display: flex; align-items: center; justify-content: center; font-weight: 600; color: #d8d9db; letter-spacing: -.1px; }
.ins-head .ic { margin-right: 5px; }
.props { display: flex; flex-direction: column; gap: 3px; width: 311px; }
.prop { display: flex; height: 21px; flex: none; }
.p20 { height: 20px; }
.pl { width: 156px; padding: 0 2px 2px 6px; color: #a9acb0; display: flex; align-items: center; white-space: nowrap; flex: none; }
.p20 .pl { padding-bottom: 0; }
.p20 .pl-up { padding-bottom: 2px; }
.rs { margin-left: auto; color: #e4e5e6; width: 11px; height: 11px; }
.val { width: 155px; display: flex; align-items: center; flex: none; padding-bottom: 1px; }
.v-btn { background: #2a303b; justify-content: center; }
.v-node { background: #1c2028; padding: 0 4px 1px 5px; border-radius: 2px; }
.v-node span { flex: 1; text-align: center; margin-right: 10px; }
.v-assign { background: #1c2028; padding: 0 4px 0 0; border-radius: 2px; }
.v-assign span { width: 134px; height: 100%; display: flex; align-items: center; justify-content: center; background: #2a303b; margin-right: 5px; padding-bottom: 1px; }
.ic-br { width: 11px; height: 11px; color: #d6d7d9; }
.v-drop { padding-right: 6px; }
.v-drop span { flex: 1; text-align: center; margin-right: 6px; }
.v-line { background: #2a303b; border-bottom: 1px solid #1f242c; padding: 0 0 2px 4px; }
.v-check { background: #1c2028; padding-left: 4px; color: #70bafa; }
.v-check .ic { margin-right: 7px; width: 11px; height: 11px; }
.v-check span { color: #5e9fd8; }
.ins-scroll { position: absolute; right: 2px; top: 6px; bottom: 3px; width: 4px; background: #333944; border-radius: 2px; }
.ins-thumb { height: 343px; background: #4d535e; border-radius: 2px; }
```
